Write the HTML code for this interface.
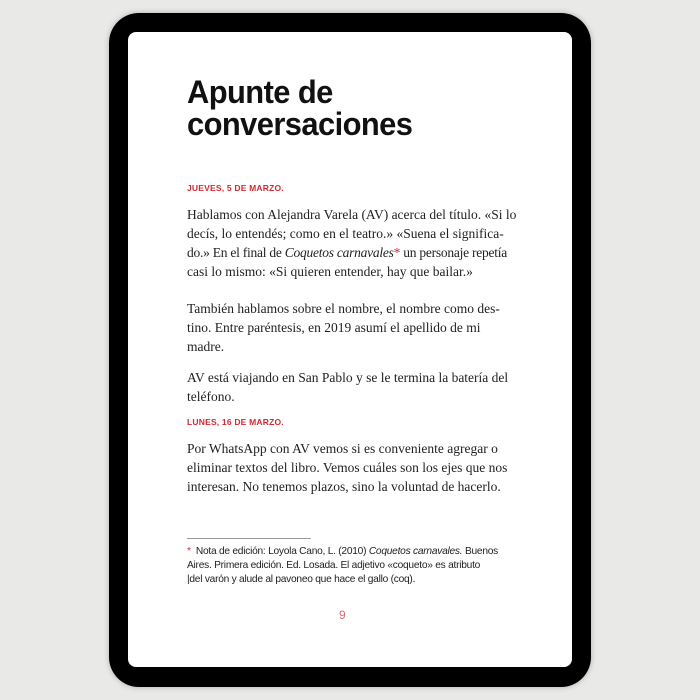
<!DOCTYPE html>
<html><head><meta charset="utf-8"><style>
html,body{margin:0;padding:0;width:700px;height:700px;background:#e9e9e7;overflow:hidden}
.tab{position:absolute;left:109px;top:13px;width:482px;height:674px;background:#000;border-radius:30px;box-shadow:0 0 6px rgba(0,0,0,.25)}
.scr{position:absolute;left:128px;top:32px;width:444px;height:635px;background:#fff;border-radius:8px}
.t{position:absolute;left:187px;top:76px;font:bold 32px/32px "Liberation Sans",sans-serif;letter-spacing:-0.6px;color:#111;white-space:nowrap;transform:scaleX(0.965);transform-origin:left}
.d{position:absolute;left:187px;font:bold 8.5px "Liberation Sans",sans-serif;color:#d9272e;letter-spacing:.2px}
.p{position:absolute;left:187px;font:13.5px/19px "Liberation Serif",serif;color:#222;margin:0;white-space:nowrap}
.f{position:absolute;left:187px;top:545px;font:10.2px/14px "Liberation Sans",sans-serif;letter-spacing:-0.25px;color:#222;white-space:nowrap}
.r{color:#d9272e}
</style></head><body>
<div class="tab"></div><div class="scr"></div>
<div class="t">Apunte de<br>conversaciones</div>
<div class="d" style="top:183px">JUEVES, 5 DE MARZO.</div>
<div class="p" style="top:205px">Hablamos con Alejandra Varela (AV) acerca del título. «Si lo<br>decís, lo entendés; como en el teatro.» «Suena el significa-<br><span style="letter-spacing:-0.25px">do.» En el final de <i>Coquetos carnavales</i><span class="r">*</span> un personaje repetía</span><br>casi lo mismo: «Si quieren entender, hay que bailar.»</div>
<div class="p" style="top:299px">También hablamos sobre el nombre, el nombre como des-<br>tino. Entre paréntesis, en 2019 asumí el apellido de mi<br>madre.</div>
<div class="p" style="top:368px">AV está viajando en San Pablo y se le termina la batería del<br>teléfono.</div>
<div class="d" style="top:417px">LUNES, 16 DE MARZO.</div>
<div class="p" style="top:439px">Por WhatsApp con AV vemos si es conveniente agregar o<br>eliminar textos del libro. Vemos cuáles son los ejes que nos<br>interesan. No tenemos plazos, sino la voluntad de hacerlo.</div>
<div style="position:absolute;left:187px;top:538px;width:124px;height:1px;background:#999"></div>
<div class="f"><span class="r">*</span>&nbsp; Nota de edición: Loyola Cano, L. (2010) <i>Coquetos carnavales.</i> Buenos<br>Aires. Primera edición. Ed. Losada. El adjetivo «coqueto» es atributo<br>|del varón y alude al pavoneo que hace el gallo (coq).</div>
<div style="position:absolute;left:339px;top:608px;font:12px 'Liberation Sans',sans-serif;color:#e06a70">9</div>
</body></html>
